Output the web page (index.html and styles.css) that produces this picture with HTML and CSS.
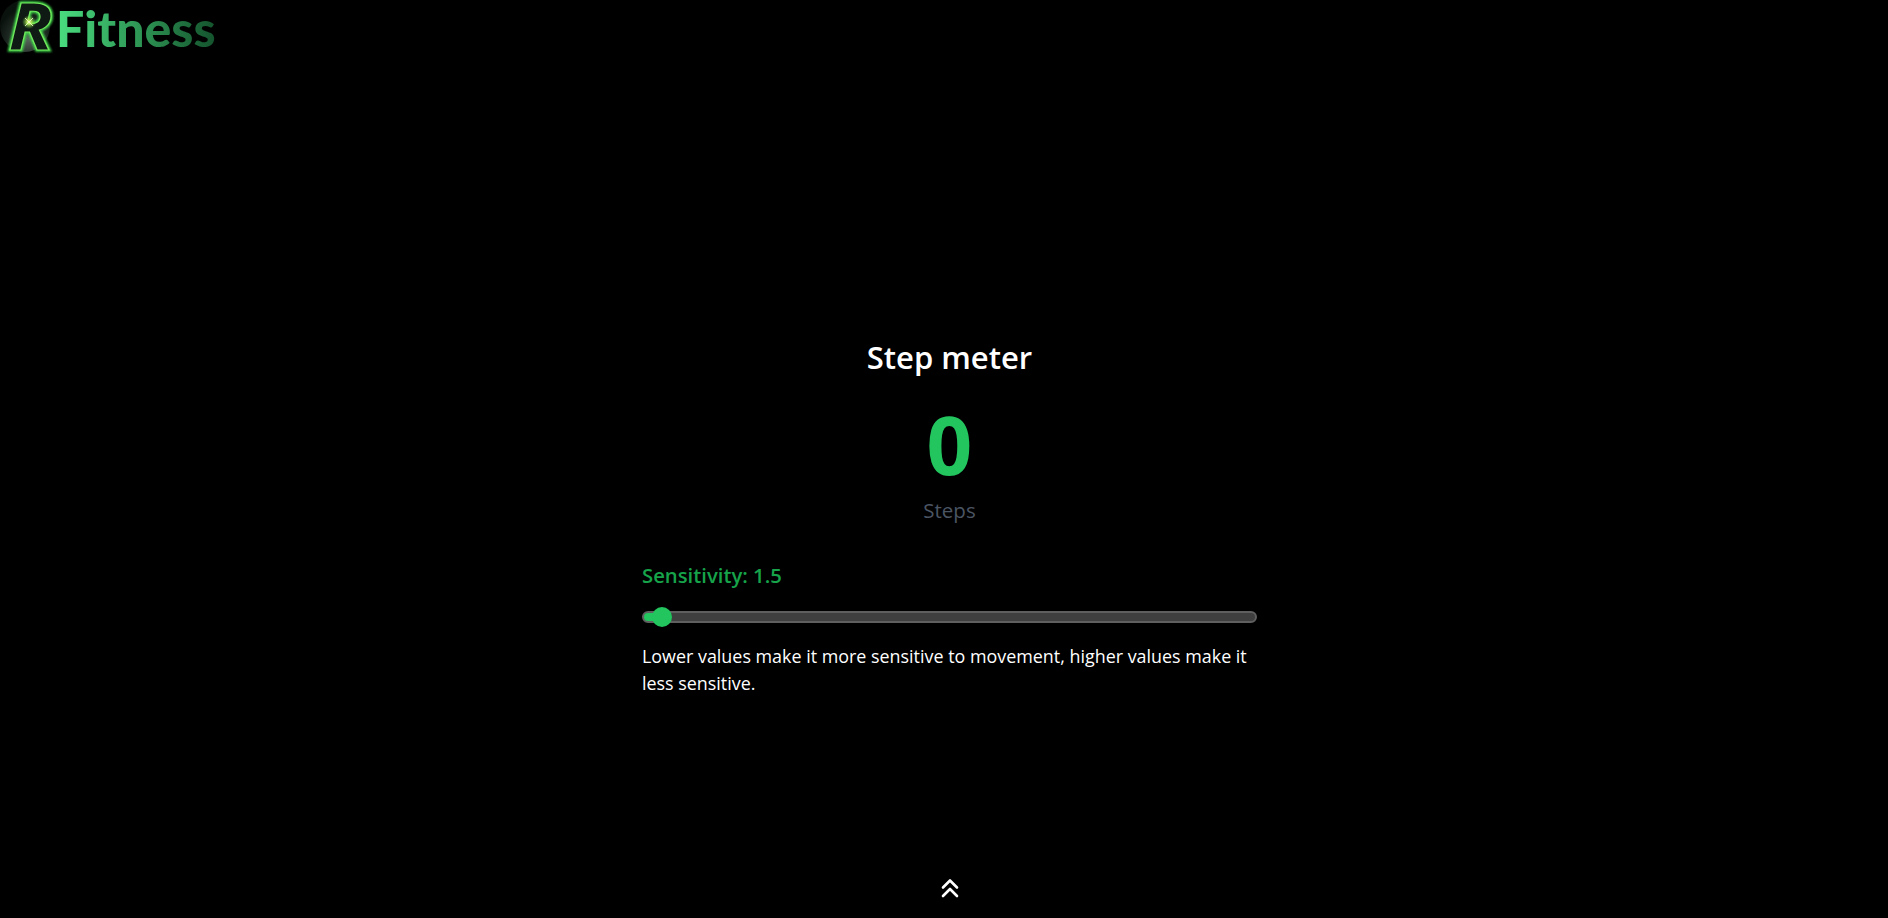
FILE: index.html
```html
<!DOCTYPE html>
<html lang="en">
<head>
<meta charset="utf-8">
<title>RFitness - Step meter</title>
<link rel="stylesheet" href="styles.css">
</head>
<body>
<div class="page">
  <header class="brand">
    <svg class="brand-mark" viewBox="0 0 56 56" width="56" height="56" aria-hidden="true">
      <defs>
        <radialGradient id="orb" cx="0.55" cy="0.75" r="0.6">
          <stop offset="0" stop-color="#59655d"/>
          <stop offset="0.55" stop-color="#232e27"/>
          <stop offset="1" stop-color="#0a120d"/>
        </radialGradient>
        <radialGradient id="spark" cx="0.5" cy="0.5" r="0.5">
          <stop offset="0" stop-color="#fbffd8"/>
          <stop offset="0.3" stop-color="#c7f05a" stop-opacity="0.85"/>
          <stop offset="1" stop-color="#6ee04a" stop-opacity="0"/>
        </radialGradient>
        <filter id="glow" x="-30%" y="-30%" width="160%" height="160%">
          <feGaussianBlur stdDeviation="1"/>
        </filter>
      </defs>
      <ellipse cx="25" cy="26" rx="25" ry="26" fill="url(#orb)"/>
      <g transform="translate(8 50) scale(1.12 1)">
        <text class="brand-r brand-r-glow" filter="url(#glow)">R</text>
        <text class="brand-r brand-r-line">R</text>
      </g>
      <circle cx="29" cy="22" r="7" fill="url(#spark)"/>
      <path class="brand-spark" d="M25 18l8 8M33 18l-8 8"/>
    </svg>
    <span class="brand-name">Fitness</span>
  </header>
  <main class="meter">
    <h1 class="meter-title">Step meter</h1>
    <div class="meter-count">0</div>
    <div class="meter-unit">Steps</div>
    <div class="control">
      <label class="control-label" for="sensitivity">Sensitivity: 1.5</label>
      <input class="control-range" id="sensitivity" type="range" min="1" max="38" step="0.1" value="1.5">
      <p class="control-help">Lower values make it more sensitive to movement, higher values make it less sensitive.</p>
    </div>
  </main>
  <footer class="pager">
    <svg viewBox="0 0 24 24" width="24" height="24" fill="none" stroke="#fff" stroke-width="2.6" stroke-linecap="round" stroke-linejoin="round" aria-hidden="true">
      <path d="M5 11.5l7-7 7 7"/>
      <path d="M5 20l7-7 7 7"/>
    </svg>
  </footer>
</div>
</body>
</html>
```
FILE: styles.css
```css
* { box-sizing: border-box; }
html, body { margin: 0; height: 100%; background: #000; }
body { font-family: "Open Sans", "Noto Sans", sans-serif; color: #fff; overflow: hidden; }
.page { height: 918px; display: flex; flex-direction: column; }
.brand { display: flex; align-items: flex-start; height: 56px; flex: none; }
.brand-mark { flex: none; display: block; }
.brand-r { font-family: "Open Sans", sans-serif; font-weight: 700; font-style: italic; font-size: 66px; }
.brand-r-glow { fill: none; stroke: #3fd24a; stroke-width: 3.5; }
.brand-r-line { fill: #101a14; stroke: #6fe85c; stroke-width: 1.2; }
.brand-spark { fill: none; stroke: #f4ffd0; stroke-width: 0.8; }
.brand-name {
  margin-left: 0;
  font-family: "Lato", sans-serif; font-weight: 900; font-size: 50px; line-height: 56px;
  background: linear-gradient(90deg, #4ade80, #14532d);
  -webkit-background-clip: text; background-clip: text; color: transparent;
}
.meter { flex: 1; display: flex; flex-direction: column; align-items: center; padding: 277px 0 0 11px; }
.meter-title { margin: 0; font-size: 31px; line-height: 48px; font-weight: 600; }
.meter-count { margin-top: 19px; font-family: "Noto Sans", sans-serif; font-size: 80px; line-height: 88px; font-weight: 700; color: #22c55e; }
.meter-unit { margin-top: 8px; font-size: 20.5px; line-height: 28px; color: #4b5563; }
.control { width: 615px; margin-top: 38px; display: flex; flex-direction: column; }
.control-label { font-size: 20.3px; line-height: 27px; font-weight: 600; color: #16a34a; }
.control-range {
  -webkit-appearance: none; appearance: none; display: block; width: 615px; height: 20px;
  margin: 18px 0 0; padding: 0; background: transparent;
}
.control-range::-webkit-slider-runnable-track {
  height: 12px; border-radius: 6px; border: 2px solid #5f5f5f;
  background: linear-gradient(90deg, #22c55e 18px, #3f3f3f 18px);
}
.control-range::-webkit-slider-thumb {
  -webkit-appearance: none; appearance: none; width: 20px; height: 20px; margin-top: -6px;
  border-radius: 50%; background: #22c55e;
}
.control-help { margin: 16px 0 0; font-size: 17.9px; line-height: 26.5px; color: #fff; }
.pager { flex: none; height: 42px; display: flex; justify-content: center; align-items: flex-start; padding-left: 11px; }
```
